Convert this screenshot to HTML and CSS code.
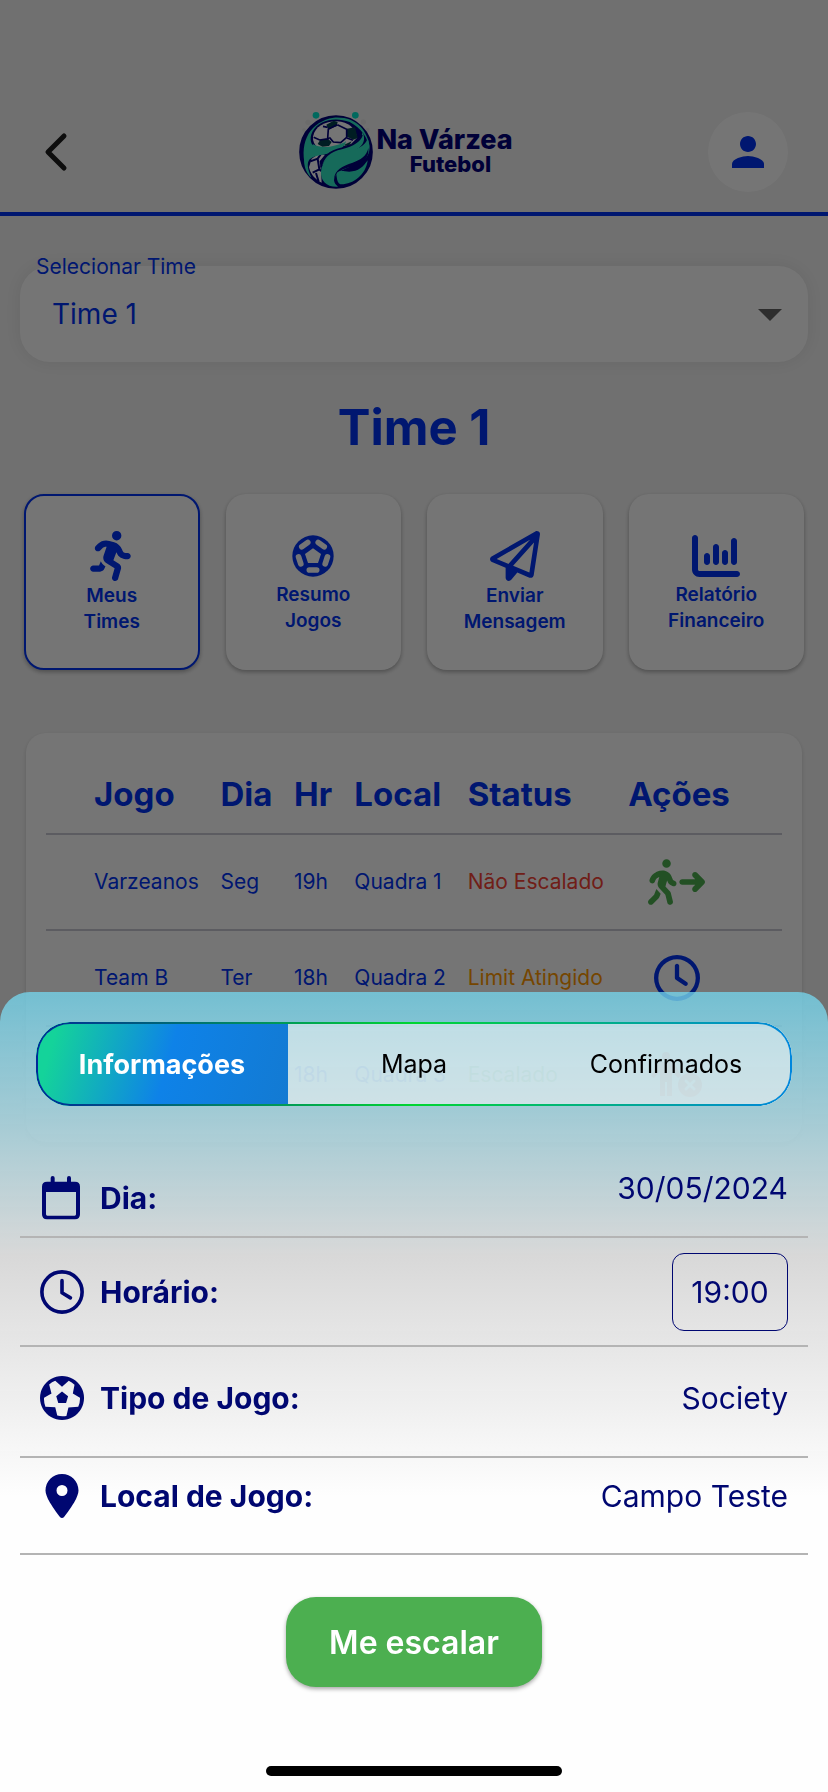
FILE: index.html
```html
<!DOCTYPE html>
<html lang="pt-BR">
<head>
<meta charset="utf-8">
<meta name="viewport" content="width=device-width, initial-scale=1">
<title>Na Várzea Futebol</title>
<link rel="stylesheet" href="styles.css">
</head>
<body>
<div class="page">
  <header class="topbar">
    <button class="back" aria-label="Voltar">
      <svg width="24" height="40" viewBox="0 0 24 40"><path d="M20 4 4 20l16 16" fill="none" stroke="currentColor" stroke-width="5" stroke-linecap="round" stroke-linejoin="round"/></svg>
    </button>
    <div class="brand">
      <svg width="85" height="85" viewBox="0 0 255 255" aria-hidden="true">
        <g fill="#e9e9e9"><circle cx="39" cy="43" r="8"/><circle cx="27" cy="66" r="6"/><circle cx="205" cy="42" r="8"/><circle cx="218" cy="66" r="6"/></g>
        <circle cx="63" cy="22" r="10" fill="#00e5cc"/><circle cx="181" cy="22" r="10" fill="#00e5cc"/>
        <circle cx="123" cy="132" r="104" fill="#00007a" stroke="#00007a" stroke-width="13"/>
        <path d="M31 175C12 98 48 40 116 29c66-5 104 36 109 97-7-37-26-66-61-84-45-17-93-5-111 28-13 24-3 44 8 47-15 14-26 29-30 58z" fill="#31e6c4"/>
        <path d="M54 86c6-30 34-46 72-46 35 2 55 20 60 50l-18 18-30 8-70 2c-10-8-15-18-14-32z" fill="#fff"/>
        <path d="m94 50 22-12 12 4-3 13-25 9zM76 95l22-3 12 10-8 12-20 2-14-8zM156 62l24-4 8 32-13 5-19-9zM148 110l22-10-6 10-14 3z" fill="#00414c"/>
        <path d="m100 62-2 30m4 0-28 4-18-8m42-30L84 55m43-5 28 14v24l-18 16-22-2-12-14m-3-24 26-14m30 40 18 7m-34 12 8 10" fill="none" stroke="#00007a" stroke-width="5"/>
        <path d="m50 152 20-14 20 2-16 20 4 28 2 36c-22-10-34-28-38-46z" fill="#fff"/>
        <path d="m46 160 22-8 10-14M68 152l5 32-20 10m20-10 8 6m-18 5 8 26" fill="none" stroke="#00007a" stroke-width="6"/>
        <path d="M55 109c22 13 49 8 71 2 15-4 24-7 26-12 3 10-13 26-33 33-30 10-58 7-75 22-9 10-7 28 5 55-25-20-33-73 6-100z" fill="#31e6c4"/>
        <path d="M218 91c18 52-10 70-48 83-31 11-52 24-53 43 1 9 6 14 12 19-34 2-53-18-51-45 3-32 23-51 51-56 42-8 80-13 89-44z" fill="#31e6c4"/>
        <path d="M77 187c3-42 27-58 61-67 35-8 60-20 65-48 14 33-8 53-44 61-38 6-70 10-82 54z" fill="#31e6c4"/>
        <path d="M117 212c3-26 24-38 56-48 24-8 42-20 47-44 4 30-18 48-44 55-26 6-46 10-59 37z" fill="#00007a"/>
        <path d="M125 206c-3-15 8-19 25-16 36 5 53-11 68-33-5 45-47 74-82 72-7-3-10-13-11-23z" fill="#31e6c4"/>
        <path d="M78 178c6-34 28-50 62-57 30-7 54-19 61-40" fill="none" stroke="#00007a" stroke-width="5"/>
      </svg>
      <div class="brand-name"><span class="brand-top">Na Várzea</span><span class="brand-bottom">Futebol</span></div>
    </div>
    <button class="avatar" aria-label="Perfil">
      <svg width="32" height="32" viewBox="4 4 16 16" fill="currentColor"><path d="M12 12c2.21 0 4-1.79 4-4s-1.79-4-4-4-4 1.79-4 4 1.79 4 4 4zm0 2c-2.67 0-8 1.34-8 4v2h16v-2c0-2.66-5.33-4-8-4z"/></svg>
    </button>
  </header>

  <main>
    <div class="field">
      <label for="team">Selecionar Time</label>
      <select id="team"><option>Time 1</option></select>
      <svg class="caret" width="24" height="12" viewBox="0 0 24 12"><path d="M0 0h24L12 12z" fill="#636363"/></svg>
    </div>
    <h1>Time 1</h1>

    <nav class="actions">
      <button class="action selected">
        <svg width="44" height="50" viewBox="0 0 448 512" fill="currentColor"><path d="M320 48a48 48 0 1 0-96 0 48 48 0 1 0 96 0zM125.700 175.500c9.900-9.900 23.400-15.500 37.500-15.500c1.900 0 3.800 .1 5.600 .3L137.600 254c-9.300 28 1.700 58.800 26.800 74.500l86.200 53.900-25.400 88.800c-4.900 17 5 34.700 22 39.600s34.700-5 39.600-22l28.700-100.400c5.900-20.600-2.600-42.600-20.700-53.900L238 299l30.900-82.400 5.100 12.300C289 264.700 323.900 288 362.700 288H384c17.700 0 32-14.300 32-32s-14.300-32-32-32H362.700c-12.900 0-24.600-7.800-29.500-19.700l-6.300-15c-14.600-35.100-44.100-61.900-80.500-73.100l-48.700-15c-11.100-3.400-22.700-5.200-34.400-5.200c-31 0-60.800 12.300-82.700 34.300L57.400 153.400c-12.500 12.500-12.500 32.800 0 45.300s32.800 12.500 45.300 0l23.100-23.100zM91.200 352H32c-17.700 0-32 14.300-32 32s14.300 32 32 32h69.600c19 0 36.200-11.200 43.900-28.500L157 361.600l-9.500-6c-17.500-10.900-30.500-26.800-37.900-44.900L91.200 352z"/></svg>
        <span>Meus<br>Times</span>
      </button>
      <button class="action">
        <svg width="48" height="48" viewBox="-72 -72 144 144">
          <mask id="ball"><rect x="-72" y="-72" width="144" height="144" fill="#fff"/>
            <g stroke="#000" fill="none" stroke-width="17" stroke-linecap="round">
              <path d="M-11 42H11"/><path d="M-11 42H11" transform="rotate(72)"/><path d="M-11 42H11" transform="rotate(144)"/><path d="M-11 42H11" transform="rotate(216)"/><path d="M-11 42H11" transform="rotate(288)"/>
            </g>
            <path d="M0-23 24-6 15 21h-30l-9-27z" fill="#000"/></mask>
          <circle r="62" fill="currentColor" mask="url(#ball)"/>
        </svg>
        <span>Resumo<br>Jogos</span>
      </button>
      <button class="action">
        <svg width="50" height="50" viewBox="0 0 512 512" fill="currentColor" fill-rule="evenodd"><path d="M16.100 260.200c-22.600 12.900-20.500 47.300 3.600 57.300L160 376V479.300c0 18.100 14.600 32.700 32.700 32.700c9.700 0 18.900-4.300 25.100-11.800l62-74.300 123.900 51.600c18.900 7.900 40.800-4.500 43.900-24.700l64-416c1.900-12.100-3.400-24.300-13.500-31.200s-23.300-7.500-34-1.400l-448 256zM68.200 285.700 409.700 90.600 190.100 336l1.200 1zM403.300 425.400 236.700 355.900 450.800 116.600z"/></svg>
        <span>Enviar<br>Mensagem</span>
      </button>
      <button class="action">
        <svg width="48" height="48" viewBox="0 0 512 512" fill="currentColor"><path d="M32 32c17.700 0 32 14.300 32 32V400c0 8.800 7.200 16 16 16H480c17.700 0 32 14.300 32 32s-14.300 32-32 32H80c-44.200 0-80-35.800-80-80V64C0 46.300 14.300 32 32 32zM160 224c17.700 0 32 14.300 32 32v64c0 17.700-14.300 32-32 32s-32-14.300-32-32V256c0-17.700 14.300-32 32-32zm128-64V320c0 17.700-14.300 32-32 32s-32-14.300-32-32V160c0-17.700 14.300-32 32-32s32 14.300 32 32zm64 32c17.700 0 32 14.300 32 32v96c0 17.700-14.300 32-32 32s-32-14.300-32-32V224c0-17.700 14.300-32 32-32zM480 96V320c0 17.700-14.300 32-32 32s-32-14.300-32-32V96c0-17.700 14.300-32 32-32s32 14.300 32 32z"/></svg>
        <span>Relatório<br>Financeiro</span>
      </button>
    </nav>

    <section class="games">
      <table>
        <colgroup><col class="c-game"><col class="c-day"><col class="c-hour"><col class="c-place"><col class="c-status"><col></colgroup>
        <thead><tr><th>Jogo</th><th>Dia</th><th>Hr</th><th>Local</th><th>Status</th><th>Ações</th></tr></thead>
        <tbody>
          <tr><td>Varzeanos</td><td>Seg</td><td>19h</td><td>Quadra 1</td><td class="red">Não Escalado</td>
            <td class="act green"><svg width="57" height="46" viewBox="0 0 640 512" fill="currentColor"><path d="M208 96a48 48 0 1 0 0-96 48 48 0 1 0 0 96zM123.700 200.500c1-.4 1.900-.8 2.900-1.200l-16.900 63.500c-5.600 21.100-.1 43.600 14.700 59.700l70.700 77.100 22 88.100c4.300 17.100 21.700 27.600 38.800 23.300s27.600-21.700 23.300-38.800l-23-92.100c-1.900-7.800-5.800-14.900-11.200-20.800l-49.500-54 19.300-65.500 9.600 23c4.400 10.600 12.500 19.300 22.800 24.500l26.700 13.300c15.800 7.900 35 1.500 42.900-14.300s1.500-35-14.300-42.900L281 232.700l-15.300-36.800C248.500 154.800 208.300 128 163.700 128c-22.800 0-45.300 4.800-66.100 14l-8 3.500c-32.900 14.600-58.100 42.400-69.400 76.500l-2.600 7.800c-5.600 16.800 3.500 34.900 20.200 40.500s34.900-3.500 40.500-20.200l2.600-7.800c5.700-17.100 18.300-30.900 34.700-38.200l8-3.500zm-30 135.100L68.700 398 9.400 457.400c-12.500 12.500-12.500 32.800 0 45.300s32.800 12.500 45.300 0l62.300-62.300c4.600-4.600 8.200-10.100 10.600-16.100l14.500-36.200-40.700-44.400c-2.500-2.700-4.800-5.600-7-8.600zM550.600 153.400c-12.500-12.500-32.800-12.500-45.300 0s-12.500 32.800 0 45.300L530.700 224H384c-17.700 0-32 14.300-32 32s14.300 32 32 32H530.700l-25.400 25.400c-12.500 12.500-12.500 32.800 0 45.300s32.800 12.500 45.300 0l80-80c12.500-12.500 12.500-32.800 0-45.300l-80-80z"/></svg></td></tr>
          <tr><td>Team B</td><td>Ter</td><td>18h</td><td>Quadra 2</td><td class="orange">Limit Atingido</td>
            <td class="act"><svg width="46" height="46" viewBox="0 0 512 512" fill="currentColor"><path d="M464 256A208 208 0 1 1 48 256a208 208 0 1 1 416 0zM0 256a256 256 0 1 0 512 0A256 256 0 1 0 0 256zM232 120V256c0 8 4 15.500 10.700 20l96 64c11 7.400 25.900 4.400 33.300-6.700s4.400-25.900-6.700-33.300L280 243.200V120c0-13.300-10.700-24-24-24s-24 10.700-24 24z"/></svg></td></tr>
          <tr><td></td><td></td><td>18h</td><td>Quadra 3</td><td class="green">Escalado</td>
            <td class="act red"><svg width="52" height="46" viewBox="0 0 52 46"><g fill="currentColor"><circle cx="15" cy="5" r="4"/><path d="M10 11h10c3 0 4 2 6 6l4 8-3 2-6-7v25h-5V31h-2v14H9V20l-6 7-3-2 5-9c2-4 3-5 5-5z"/><circle cx="39" cy="34" r="12"/></g><path d="m35 30 8 8m0-8-8 8" stroke="#fff" stroke-width="3" stroke-linecap="round"/></svg></td></tr>
        </tbody>
      </table>
    </section>
  </main>
</div>

<div class="scrim"></div>

<section class="sheet" role="dialog" aria-label="Informações do jogo">
  <div class="tabs" role="tablist">
    <button class="tab active" role="tab" aria-selected="true">Informações</button>
    <button class="tab" role="tab" aria-selected="false">Mapa</button>
    <button class="tab" role="tab" aria-selected="false">Confirmados</button>
  </div>
  <div class="rows">
    <div class="row date">
      <svg width="44" height="44" viewBox="0 0 132 132"><path fill="currentColor" fill-rule="evenodd" d="M32 17V6q0-6 6-6t6 6v11h37V6q0-6 6-6t6 6v11h12q15 0 15 15v83q0 15-15 15H21q-15 0-15-15V32q0-15 15-15zM18 48v67q0 4 4 4h82q4 0 4-4V48z"/></svg>
      <span class="name">Dia:</span><span class="value">30/05/2024</span>
    </div>
    <div class="row time">
      <svg width="44" height="44" viewBox="0 0 512 512"><g fill="none" stroke="currentColor" stroke-linecap="round" stroke-linejoin="round"><circle cx="256" cy="256" r="234" stroke-width="42"/><path d="M256 124v140l98 60" stroke-width="42"/></g></svg>
      <label class="name" for="time">Horário:</label><input id="time" type="text" value="19:00">
    </div>
    <div class="row kind">
      <svg width="44" height="44" viewBox="120 738 130 130"><path fill="currentColor" fill-rule="evenodd" d="M185 738a65 65 0 1 0 .1 0zM185 770l-20-18q-10 4-18 11l7 27-22 12q-1 14 4 27l29 1 6 25q13 4 27 1l6-25 29-2q6-13 5-27l-21-12 5-26q-8-7-17-12zM185 784l18 14-6 20h-23l-6-20z"/></svg>
      <span class="name">Tipo de Jogo:</span><span class="value">Society</span>
    </div>
    <div class="row place">
      <svg width="44" height="44" viewBox="-64 0 512 512"><path fill="currentColor" fill-rule="evenodd" d="M215.700 499.200C267 435 384 279.400 384 192C384 86 298 0 192 0S0 86 0 192c0 87.400 117 243 168.300 307.200c12.300 15.300 35.100 15.300 47.400 0zM192 128a64 64 0 1 1 0 128 64 64 0 1 1 0-128z"/></svg>
      <span class="name">Local de Jogo:</span><span class="value">Campo Teste</span>
    </div>
  </div>
  <button class="join">Me escalar</button>
  <div class="home-bar"></div>
</section>
</body>
</html>
```
FILE: styles.css
```css
* { box-sizing: border-box; }
body {
  margin: 0;
  height: 100vh;
  overflow: hidden;
  background: #f4f4f4;
  color: #0034f4;
  font-family: Inter, "Liberation Sans", sans-serif;
}
button, input, select { font: inherit; color: inherit; border: 0; background: none; margin: 0; padding: 0; }
svg { display: block; flex: none; }
.page { height: 100vh; overflow: hidden; }

.topbar {
  display: flex;
  justify-content: space-between;
  align-items: center;
  padding: 110px 40px 18px 44px;
  border-bottom: 4px solid #0034f4;
}
.topbar .back { color: #1d1d1d; padding-right: 56px; }
.brand { display: flex; align-items: center; height: 80px; margin: 0 0 4px -24px; }
.brand-name { display: flex; flex-direction: column; align-items: center; color: #00007a; font-weight: 800; margin: 2px 0 0 -4px; }
.brand-top { font-size: 27px; line-height: 26px; }
.brand-bottom { font-size: 22px; line-height: 22px; padding-left: 12px; }
.avatar { width: 80px; height: 80px; border-radius: 50%; background: #fff; display: grid; place-items: center; }

.field {
  position: relative;
  margin: 50px 20px 0;
  border-radius: 30px;
  background: #fff;
  box-shadow: 0 0 20px rgba(0, 0, 0, .08);
}
.field label { position: absolute; left: 16px; top: -12px; font-size: 21px; line-height: 26px; }
.field select { appearance: none; width: 100%; height: 96px; padding: 0 32px; font-size: 28px; }
.caret { position: absolute; right: 26px; top: 43px; }

h1 { margin: 36px 0; text-align: center; font-size: 49px; line-height: 60px; font-weight: 700; }

.actions { display: grid; grid-template-columns: repeat(4, 1fr); gap: 26px; padding: 0 24px; }
.action {
  display: flex;
  flex-direction: column;
  align-items: center;
  justify-content: center;
  aspect-ratio: 1;
  border-radius: 20px;
  background: #fff;
  box-shadow: 0 2px 4px rgba(0, 0, 0, .3);
  font-size: 19px;
  line-height: 26px;
  font-weight: 600;
}
.action svg { margin-top: 2px; }
.action span { margin-top: 2px; }
.action.selected { border: 2px solid #0034f4; }

.games { margin: 63px 26px 0; padding: 20px; border-radius: 20px; background: #fff; box-shadow: 0 2px 4px rgba(0, 0, 0, .15); }
table { width: 100%; table-layout: fixed; border-collapse: collapse; text-align: left; }
.c-game { width: 23.7%; } .c-day { width: 10%; } .c-hour { width: 8.2%; } .c-place { width: 15.4%; } .c-status { width: 21.8%; }
th, td { padding: 0; white-space: nowrap; }
th { height: 81px; padding-top: 3px; font-size: 33px; font-weight: 700; }
td { height: 96px; font-size: 21px; }
th:first-child, td:first-child { padding-left: 48px; }
thead tr, tbody tr { border-bottom: 2px solid #c8c8d4; }
tbody tr:last-child { border-bottom: 0; }
.act svg { margin: 0 auto; }
td.act { padding-right: 57px; }
.red { color: #f44336; } .orange { color: #ff9800; } .green { color: #4caf50; }

.scrim { position: fixed; inset: 0; background: rgba(0, 0, 0, .54); }

.sheet {
  position: fixed;
  left: 0; right: 0; bottom: 0;
  display: flex;
  flex-direction: column;
  padding: 30px 20px 16px;
  border-radius: 30px 30px 0 0;
  background: linear-gradient(rgba(116, 214, 238, .77), rgba(220, 220, 220, .97) 33%, #fefefe 63%);
  color: #000771;
}
.tabs { position: relative; display: grid; grid-template-columns: repeat(3, 1fr); height: 84px; margin: 0 16px; border-radius: 34px; overflow: hidden; background: rgba(245, 245, 245, .54); }
.tabs::after {
  content: "";
  position: absolute;
  inset: 0;
  padding: 2px;
  border-radius: 34px;
  background: linear-gradient(90deg, #002a9a, #00d632 50%, #0086dd);
  mask: linear-gradient(#000 0 0) content-box exclude, linear-gradient(#000 0 0);
  pointer-events: none;
}
.tab { font-size: 25px; color: #000; }
.tab.active { color: #fff; font-size: 27px; font-weight: 700; background: linear-gradient(106deg, #14d39a 8%, #0e82e8 52%, #137ad2); }

.rows { margin-top: 34px; font-size: 30px; line-height: 36px; }
.row { display: flex; align-items: center; gap: 16px; padding: 0 20px; border-bottom: 2px solid #b4b4b4; }
.name { font-weight: 700; flex: 1; }
.date { height: 98px; padding-top: 20px; }
.date .value { align-self: flex-start; margin-top: 10px; }
.time { height: 109px; }
.time input { width: 116px; height: 78px; border: 1px solid #000771; border-radius: 12px; text-align: center; }
.kind { height: 111px; padding-bottom: 8px; }
.place { height: 97px; padding-bottom: 20px; }
.join {
  align-self: center;
  margin: 42px 0 79px;
  width: 256px;
  height: 90px;
  border-radius: 30px;
  background: #4caf50;
  box-shadow: 0 2px 4px rgba(0, 0, 0, .35);
  color: #fff;
  font-size: 32px;
  font-weight: 600;
}
.home-bar { align-self: center; width: 296px; height: 10px; border-radius: 5px; background: #000; }
```
